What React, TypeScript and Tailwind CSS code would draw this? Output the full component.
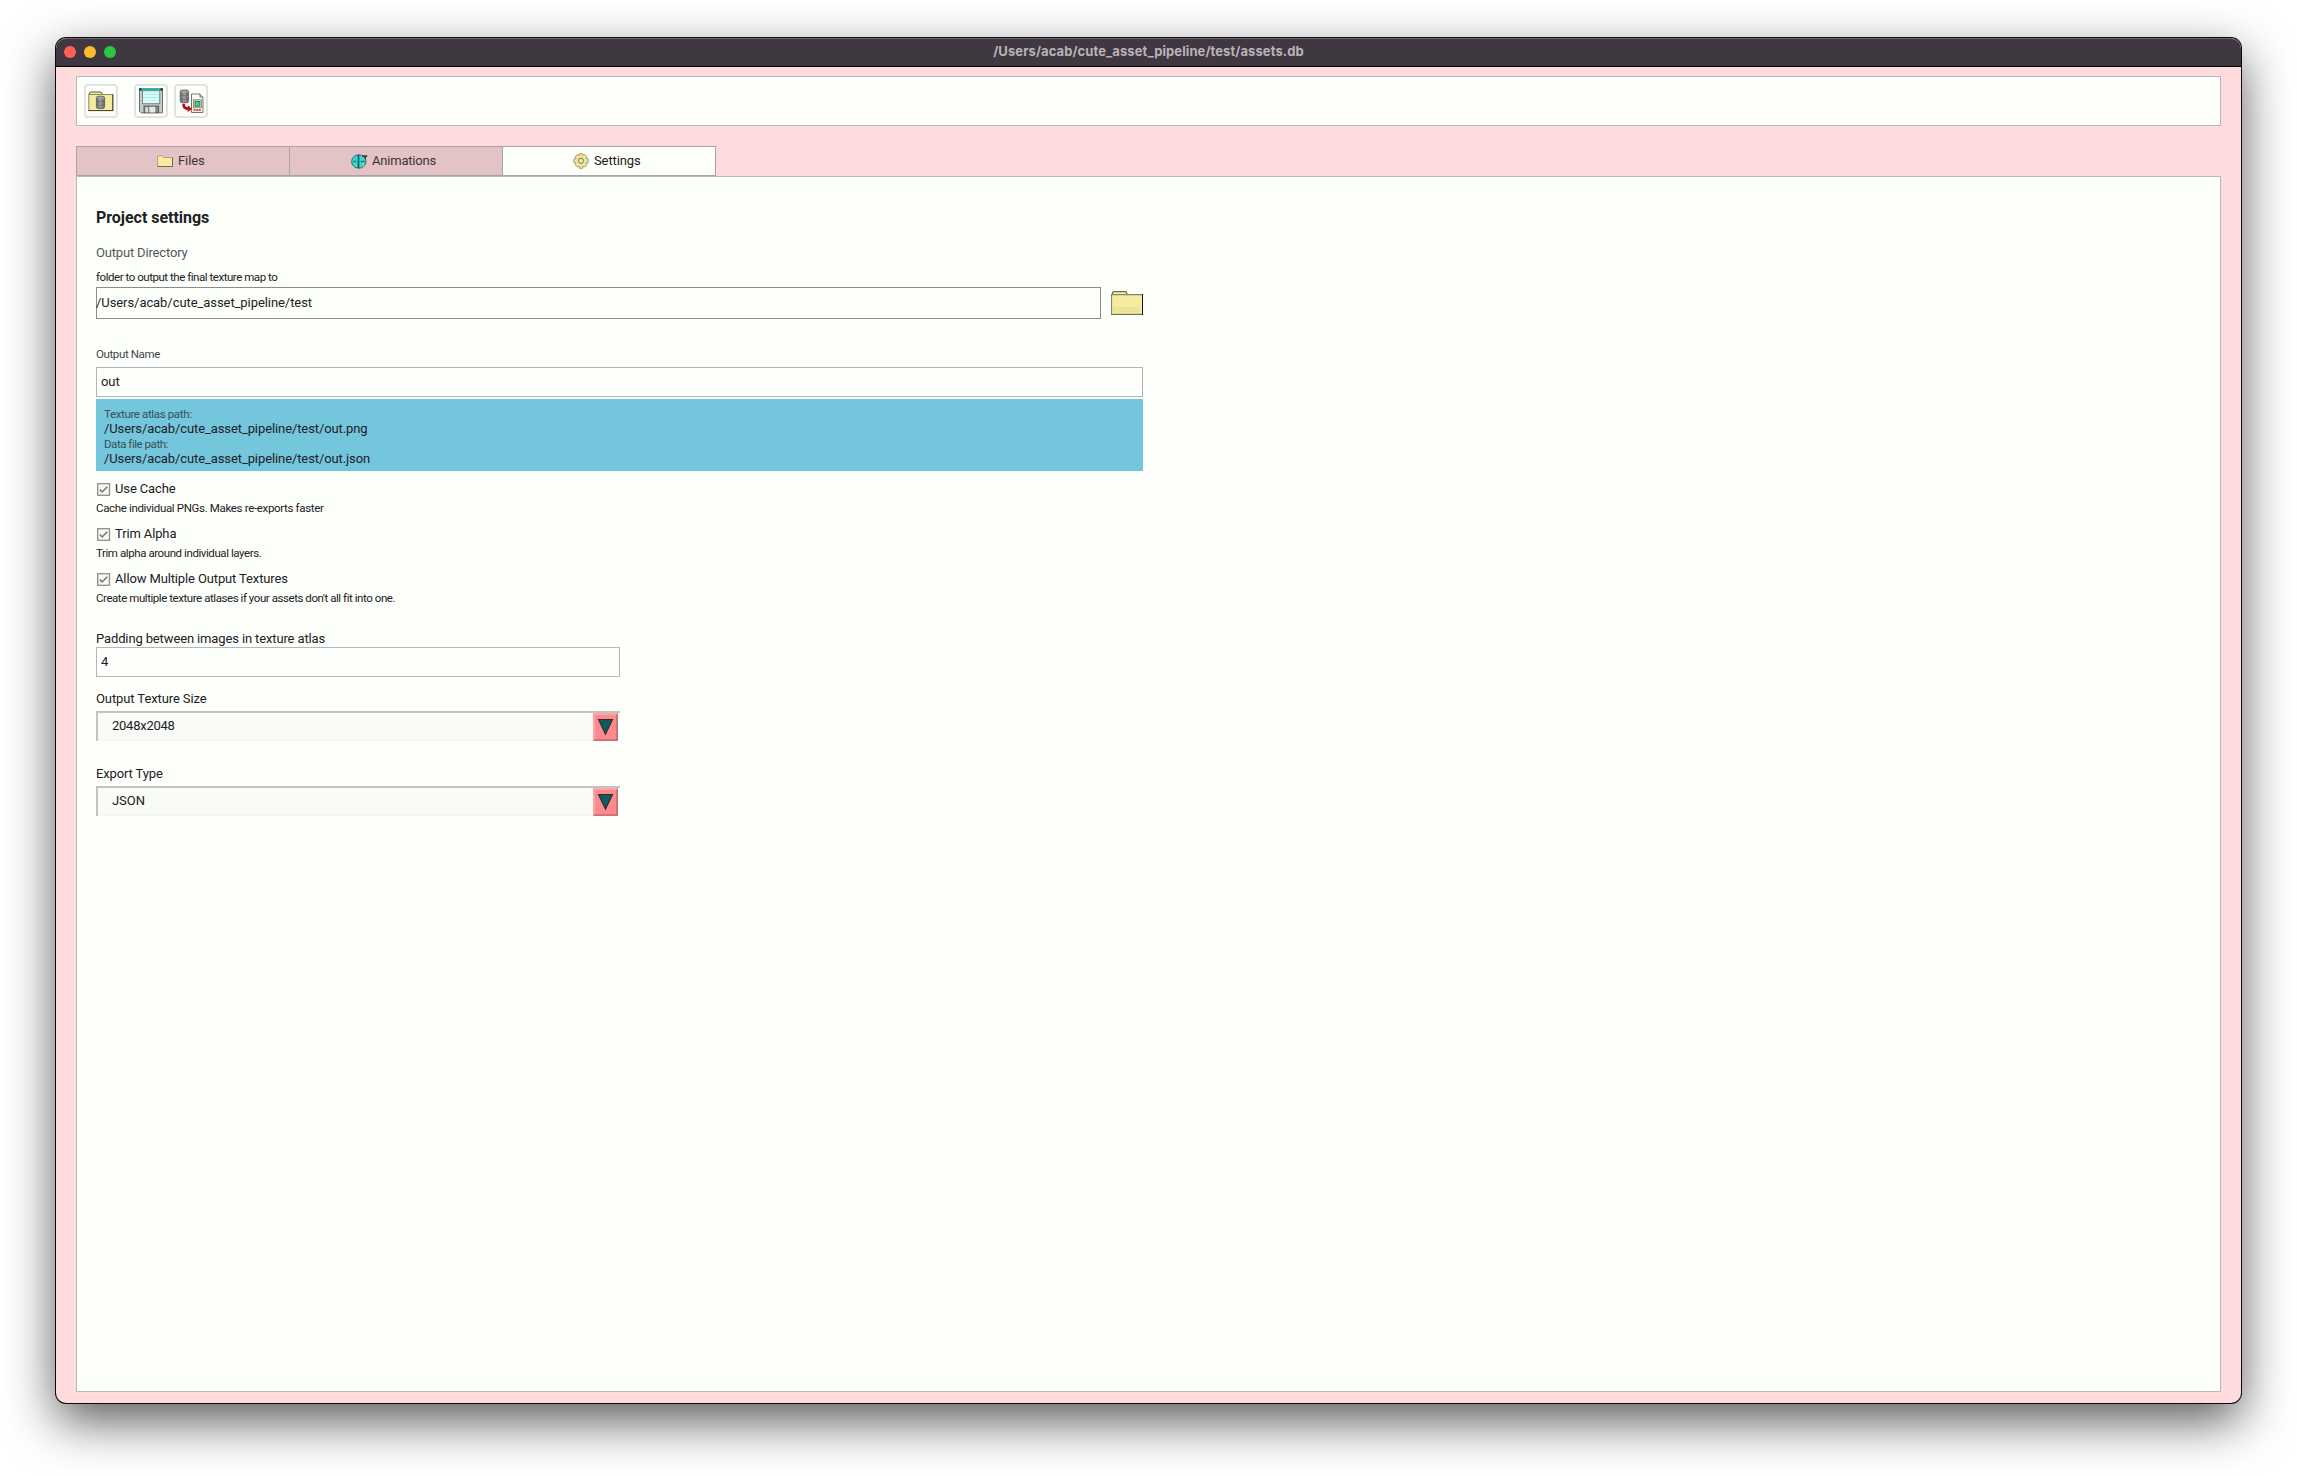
import React from "react";

function Cylinder({ x, y, w, h }: { x: number; y: number; w: number; h: number }) {
  return (
    <g>
      <rect x={x} y={y} width={w} height={h} rx={2} fill="#7b7b7b" stroke="#4c4c4c" strokeWidth={0.7} />
      <rect x={x + w * 0.3} y={y + 1} width={w * 0.35} height={h - 2} fill="#9c9c9c" />
      <ellipse cx={x + w / 2} cy={y + 1.6} rx={w / 2 - 0.6} ry={1.2} fill="#a2a2a2" />
      <path
        d={`M${x} ${y + h * 0.38}q${w / 2} 2 ${w} 0M${x} ${y + h * 0.68}q${w / 2} 2 ${w} 0`}
        fill="none"
        stroke="#5a5a5a"
        strokeWidth={0.6}
      />
    </g>
  );
}

function DatabaseFolderIcon() {
  return (
    <svg width="34" height="34" viewBox="0 0 34 34">
      <path d="M5.500 10.500V9l1-1h10.500l1.500 2.500" fill="#f3eba0" stroke="#55543f" />
      <rect x="4.800" y="10.500" width="24" height="16" fill="#f3eba0" stroke="#8a8764" />
      <path d="M28.800 10.500v16.200M4.400 26.600h24.800" stroke="#45432c" fill="none" />
      <Cylinder x={12.4} y={12.2} w={8.2} h={12.4} />
    </svg>
  );
}

function SaveIcon() {
  return (
    <svg width="34" height="34" viewBox="0 0 34 34">
      <path d="M5.500 4.800h23v24h-21.500l-1.500-1.500z" fill="#c6cac9" stroke="#6d7070" />
      <rect x="5" y="4.200" width="24" height="2.600" fill="#36b0ad" />
      <path d="M5 4.300h2.500v2.500h-2.500zM26.500 4.300h2.500v2.500h-2.500z" fill="#174a4c" />
      <rect x="8.500" y="6.500" width="17.200" height="13.200" fill="#dcfdf9" stroke="#798583" />
      <path d="M9 8h16.200M9 10.500h16.200M9 13.500h16.200" stroke="#a4ebe5" />
      <path d="M9 16.500h16.200" stroke="#c4f5f0" />
      <rect x="10" y="22" width="14.700" height="6.800" fill="#7f8484" stroke="#4d5151" strokeWidth="0.8" />
      <rect x="11.300" y="23.200" width="2.700" height="5.200" fill="#d9dcdc" />
      <rect x="15.300" y="22.800" width="6" height="5.700" fill="#e4e7e6" />
    </svg>
  );
}

function ExportIcon() {
  return (
    <svg width="34" height="34" viewBox="0 0 34 34">
      <Cylinder x={6.2} y={6} w={8.4} h={12.8} />
      <path d="M17.500 10h8.500l3 3v15.500h-11.500z" fill="#fbfcfa" stroke="#747674" />
      <path d="M26 10v3h3" fill="#dddddd" stroke="#555" strokeWidth="0.8" />
      <rect x="19.300" y="15.800" width="8.200" height="8" fill="#e8dc90" stroke="#827c4b" strokeWidth="0.8" />
      <rect x="21" y="17.400" width="4.800" height="4.800" fill="#2fd0c6" stroke="#2c6e69" strokeWidth="0.8" />
      <path d="M19.500 26h2M22.300 26h2M25 26h1.800" stroke="#e33b3b" strokeWidth="1.8" />
      <path d="M9.700 19.800c-.2 3.400 1 5 5.200 5" fill="none" stroke="#b90d16" strokeWidth="2.800" />
      <path d="M13.800 21.300l4.400 3.600-4.600 3z" fill="#c80d18" />
    </svg>
  );
}

function SmallFolderIcon() {
  return (
    <svg width="16" height="12" viewBox="0 0 16 12" className="mt-[2px]">
      <path d="M.5 11.500V.8h5.200l1 1.700h8.800v9z" fill="#f4eca0" stroke="#aca585" />
      <path d="M15.500 2.500v9H.5" fill="none" stroke="#6f6a4c" />
    </svg>
  );
}

function AnimationIcon() {
  return (
    <svg width="17" height="15" viewBox="0 0 17 15" className="mt-px">
      <ellipse cx="7.800" cy="7.500" rx="7.200" ry="6.700" fill="#32dcd3" stroke="#4b6465" strokeWidth="1" />
      <path d="M7.500 1v13" stroke="#1a5257" strokeWidth="1.700" />
      <path d="M2 7.500h3.400M9.700 7.500h4" stroke="#1f777b" strokeWidth="1.500" />
      <path d="M11.300 1.200h5v1.700h-1.300v2.100h-1.300v-2.100h-2.400z" fill="#40383f" />
      <path d="M11.500 9.800l2 1-1.500 2z" fill="#c8e070" />
    </svg>
  );
}

function GearIcon() {
  return (
    <svg width="16" height="16" viewBox="0 0 16 16">
      <path
        d="M6.400.7h3.200l.4 1.900 1.700-1 2.200 2.200-1 1.700 2.300.5v3.500l-2.300.5 1 1.700-2.200 2.300-1.700-1-.5 2.300H6.500L6 13l-1.700 1-2.200-2.300 1-1.700-2.300-.5V6l2.300-.5-1-1.700 2.200-2.200 1.700 1z"
        fill="#f1e596"
        stroke="#a39a72"
        strokeWidth="1"
      />
      <circle cx="8" cy="7.800" r="2.600" fill="#e2dcae" stroke="#857f60" strokeWidth="1" />
      <circle cx="8" cy="7.800" r="1" fill="#faf8e6" />
    </svg>
  );
}

function FolderIcon() {
  return (
    <svg width="32" height="24" viewBox="0 0 32 24" className="mt-[4px]">
      <path d="M1.500 4V1.500l1-.8h12.500l1.500 3" fill="#f4eca0" stroke="#6e6b50" strokeWidth="1.200" />
      <rect x=".6" y="3.600" width="30.800" height="19.800" fill="#f4eca0" />
      <rect x="2" y="16" width="27" height="5.500" fill="#ece399" />
      <path d="M.5 24V3.700h31" fill="none" stroke="#87836a" strokeWidth="1.200" />
      <path d="M.5 23.400h31" stroke="#777253" strokeWidth="1.200" />
      <path d="M31.500 3v21" stroke="#191812" />
    </svg>
  );
}

function ToolButton({ children }: { children: React.ReactNode }) {
  return (
    <button className="relative size-[34px] rounded-[4px] border-2 border-[#e0e3e0] bg-[#fdfffb]">
      <span className="absolute -left-[2px] -top-[2px] block">{children}</span>
    </button>
  );
}

function Check({ label, labelClass, note, noteClass }: { label: string; labelClass: string; note: string; noteClass: string }) {
  return (
    <div className="h-[45px]">
      <div className="flex h-[15px] pl-px">
        <svg width="13" height="13" viewBox="0 0 13 13" className="mt-[2px] overflow-visible">
          <rect x=".7" y=".7" width="11.800" height="11.600" fill="#f6f8f4" stroke="#8d8f8c" strokeWidth="1.300" />
          <path d="M2.800 6.500l2.300 2.500L10.300 3.800" fill="none" stroke="#737572" strokeWidth="1.500" />
        </svg>
        <span className={"ml-[5px] text-[13px] leading-[15px] " + labelClass}>{label}</span>
      </div>
      <div className={"mt-[5px] text-[11.5px] leading-[14px] " + noteClass}>{note}</div>
    </div>
  );
}

function Select({ value, valueClass }: { value: string; valueClass: string }) {
  return (
    <div className="flex h-[30px] w-[524px] border-l-2 border-t-2 border-[#c1c4bf]">
      <div className={"w-[495px] border-b-2 border-[#f4f6f2] bg-[#f9fbf7] pl-[14px] pt-[5px] text-[13px] leading-[15px] " + valueClass}>
        {value}
      </div>
      <div className="h-[28px] w-[25px] border-2 border-b-[#cf7377] border-l-[#ffa3a7] border-r-[#cf7377] border-t-[#ffa3a7] bg-[#ff8a8e]">
        <svg width="21" height="24" viewBox="0 0 21 24">
          <path d="M3.500 4.500h14L10.500 19.300z" fill="#135a5c" stroke="#25302f" strokeWidth="1.100" />
        </svg>
      </div>
    </div>
  );
}

export default function App() {
  return (
    <div className="h-[1476px] w-[2297px] overflow-hidden whitespace-nowrap bg-white px-[56px] pt-[38px] font-['Roboto',sans-serif] text-[13px] leading-[15px] text-[#1d2025]">
      <div className="flex h-[1365px] flex-col overflow-hidden rounded-[10px] bg-[#ffdbde] shadow-[0_0_0_1px_#0c0a0c,0_18px_50px_rgba(0,0,0,0.65)]">
        <header className="grid h-[29px] shrink-0 grid-cols-[1fr_auto_1fr] rounded-t-[10px] border-b border-black bg-[#403840] shadow-[inset_0_1px_0_#716b71]">
          <div className="flex gap-2 pl-2 pt-2">
            <span className="size-3 rounded-full bg-[#ff5f57]" />
            <span className="size-3 rounded-full bg-[#febc2e]" />
            <span className="size-3 rounded-full bg-[#28c840]" />
          </div>
          <h1 className="pt-[5px] font-['Inter',sans-serif] text-[13px] font-bold leading-[16px] tracking-[0.09px] text-[#b9b3b9]">
            /Users/acab/cute_asset_pipeline/test/assets.db
          </h1>
        </header>

        <div className="mx-[20px] mt-[9px] flex h-[50px] shrink-0 border border-[#b4b8b7] bg-[#fcfffa] pl-[7px] pt-[7px]">
          <ToolButton>
            <DatabaseFolderIcon />
          </ToolButton>
          <div className="ml-4 flex gap-[6px]">
            <ToolButton>
              <SaveIcon />
            </ToolButton>
            <ToolButton>
              <ExportIcon />
            </ToolButton>
          </div>
        </div>

        <nav className="mx-[20px] mt-[20px] flex h-[30px] w-[640px] shrink-0 border border-[#a5a4a6] text-[#3b3439]">
          <div className="flex w-[213px] gap-[5px] border-r border-[#a5a4a6] bg-[#e4c3c6] pl-[80px] pt-[6px]">
            <SmallFolderIcon />
            <span className="tracking-[-0.1px]">Files</span>
          </div>
          <div className="flex w-[213px] gap-[4px] border-r border-[#a5a4a6] bg-[#e4c3c6] pl-[61px] pt-[6px]">
            <AnimationIcon />
            <span className="tracking-[-0.2px]">Animations</span>
          </div>
          <div className="flex w-[212px] gap-[5px] bg-[#fcfffa] pl-[70px] pt-[6px] text-[#1d2025]">
            <GearIcon />
            <span className="tracking-[-0.1px]">Settings</span>
          </div>
        </nav>

        <main className="mx-[20px] h-[1216px] shrink-0 border border-[#b4b8b7] bg-[#fcfffa] pl-[19px] pt-[31px]">
          <h2 className="text-[16px] font-bold leading-[19px] tracking-[-0.03px]">Project settings</h2>
          <div className="mt-[18px] tracking-[-0.17px] text-[#55585b]">Output Directory</div>
          <div className="mt-[10px] text-[11.5px] leading-[14px] tracking-[-0.46px]">folder to output the final texture map to</div>
          <div className="mt-[3px] flex gap-[10px]">
            <div className="h-[32px] w-[1005px] border border-[#8a8c8b] pt-[7px] tracking-[-0.07px]">
              <span className="-ml-px">/Users/acab/cute_asset_pipeline/test</span>
            </div>
            <FolderIcon />
          </div>

          <div className="mt-[28px] text-[11.5px] leading-[14px] tracking-[-0.38px] text-[#43464a]">Output Name</div>
          <div className="mt-[6px] h-[30px] w-[1047px] border border-[#b5b1bd] pl-[4px] pt-[6px] tracking-[-0.1px]">out</div>
          <div className="mt-[2px] h-[72px] w-[1047px] bg-[#74c6dd] pl-[8px] pt-[8px]">
            <div className="text-[11.5px] leading-[14px] tracking-[-0.36px] text-[#32505b]">Texture atlas path:</div>
            <div className="tracking-[-0.1px]">/Users/acab/cute_asset_pipeline/test/out.png</div>
            <div className="mt-px text-[11.5px] leading-[14px] tracking-[-0.46px] text-[#32505b]">Data file path:</div>
            <div className="tracking-[-0.1px]">/Users/acab/cute_asset_pipeline/test/out.json</div>
          </div>

          <div className="mt-[10px]">
            <Check
              label="Use Cache"
              labelClass="tracking-[-0.13px]"
              note="Cache individual PNGs. Makes re-exports faster"
              noteClass="tracking-[-0.34px]"
            />
            <Check
              label="Trim Alpha"
              labelClass="tracking-[-0.13px]"
              note="Trim alpha around individual layers."
              noteClass="tracking-[-0.42px]"
            />
            <Check
              label="Allow Multiple Output Textures"
              labelClass="tracking-[-0.13px]"
              note="Create multiple texture atlases if your assets don't all fit into one."
              noteClass="tracking-[-0.44px]"
            />
          </div>

          <div className="mt-[15px] tracking-[-0.13px]">Padding between images in texture atlas</div>
          <div className="mt-px h-[30px] w-[524px] border border-[#b5b4c0] pl-[4px] pt-[6px]">4</div>
          <div className="mb-[5px] mt-[14px] tracking-[-0.1px]">Output Texture Size</div>
          <Select value="2048x2048" valueClass="tracking-[-0.25px]" />
          <div className="mb-[5px] mt-[25px] tracking-[-0.13px]">Export Type</div>
          <Select value="JSON" valueClass="tracking-[-0.05px]" />
        </main>
      </div>
    </div>
  );
}
